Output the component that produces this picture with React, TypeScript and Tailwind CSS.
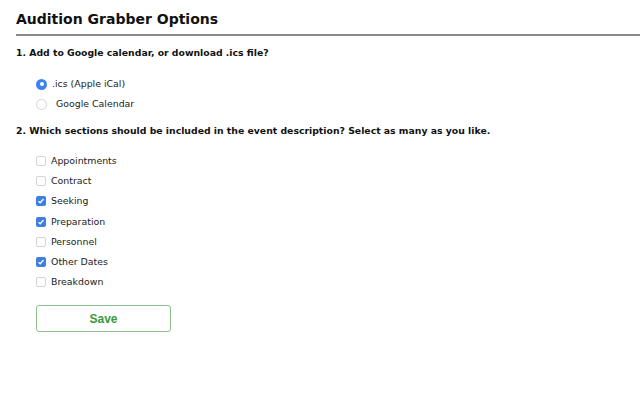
import React from "react";

const Radio = ({ checked }: { checked: boolean }) =>
  checked ? (
    <span className="w-[11px] h-[11px] rounded-full bg-[#3b82f6] flex items-center justify-center shrink-0">
      <span className="w-[4px] h-[4px] rounded-full bg-white" />
    </span>
  ) : (
    <span className="w-[11px] h-[11px] rounded-full border border-[#d4d4d4] bg-white shrink-0" />
  );

const Check = ({ checked }: { checked: boolean }) =>
  checked ? (
    <span className="w-[10px] h-[10px] rounded-[2px] bg-[#3b7fe0] flex items-center justify-center shrink-0">
      <svg width="8" height="8" viewBox="0 0 8 8">
        <path d="M1.5 4.2 L3.2 5.8 L6.5 2" stroke="white" strokeWidth="1.3" fill="none" />
      </svg>
    </span>
  ) : (
    <span className="w-[10px] h-[10px] rounded-[2px] border border-[#d4d4d4] bg-white shrink-0" />
  );

export default function App() {
  const sections: [string, boolean][] = [
    ["Appointments", false],
    ["Contract", false],
    ["Seeking", true],
    ["Preparation", true],
    ["Personnel", false],
    ["Other Dates", true],
    ["Breakdown", false],
  ];
  return (
    <div className="w-[640px] h-[400px] bg-white text-black overflow-hidden" style={{ fontFamily: '"DejaVu Sans", Verdana, sans-serif' }}>
      <div className="pl-4 pt-[9px]">
        <h1 className="text-[14px] font-bold leading-[20px] text-[#111]">Audition Grabber Options</h1>
        <div className="mt-[5px] h-[2px] bg-[#8a8a8a]" />
        <p className="mt-[10px] text-[9.3px] font-bold leading-[14px] text-[#111]">1. Add to Google calendar, or download .ics file?</p>
        <div className="mt-[17px] pl-[20px] flex flex-col gap-[6px] text-[9.4px] leading-[14px] text-[#222]">
          <label className="flex items-center gap-[5px]"><Radio checked={true} />.ics (Apple iCal)</label>
          <label className="flex items-center gap-[9px]"><Radio checked={false} />Google Calendar</label>
        </div>
        <p className="mt-[13px] text-[9.3px] font-bold leading-[14px] text-[#111]">2. Which sections should be included in the event description? Select as many as you like.</p>
        <div className="mt-[16px] pl-[20px] flex flex-col gap-[6.2px] text-[9.4px] leading-[14px] text-[#222]">
          {sections.map(([s, c]) => (
            <label key={s} className="flex items-center gap-[5px]"><Check checked={c} />{s}</label>
          ))}
        </div>
        <button className="mt-[16px] ml-[20px] w-[135px] h-[27px] rounded-[3px] border border-[#8cbf8c] text-[#3a9a3a] text-[12px] font-bold bg-white" style={{ fontFamily: '"Liberation Sans", Arial, sans-serif' }}>Save</button>
      </div>
    </div>
  );
}
